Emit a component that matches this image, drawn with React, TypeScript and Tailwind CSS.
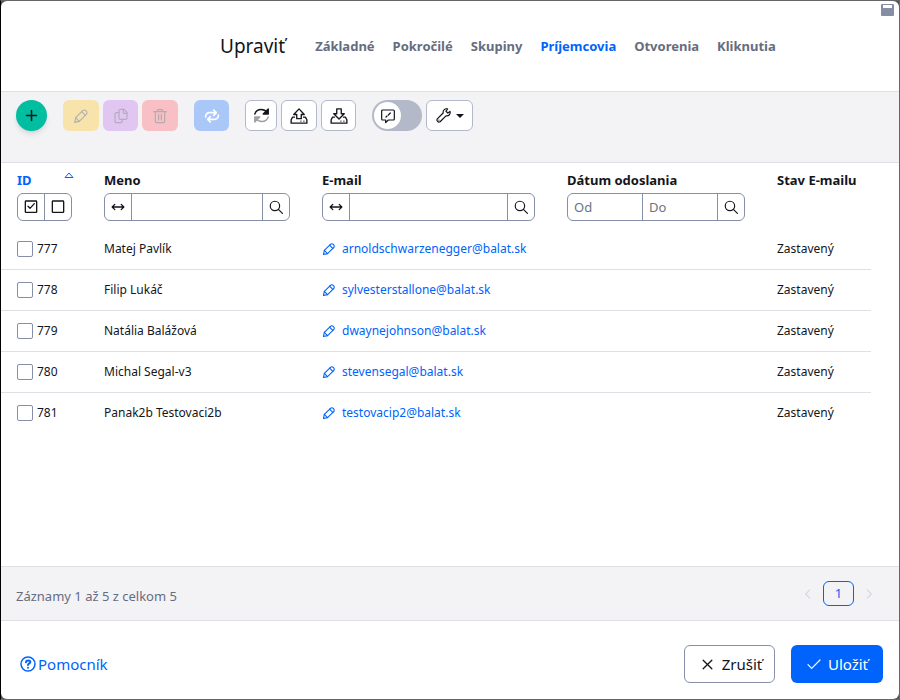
import React from "react";
import type { ReactNode } from "react";

function Icon({ size = 18, stroke = 1.5, className = "", children }: { size?: number; stroke?: number; className?: string; children: ReactNode }) {
  return (
    <svg width={size} height={size} viewBox="0 0 24 24" fill="none" stroke="currentColor" strokeWidth={stroke} strokeLinecap="round" strokeLinejoin="round" className={"shrink-0 " + className} aria-hidden="true">
      {children}
    </svg>
  );
}

const pencil = (
  <>
    <path d="M2.500 21.500l1.500-7L14.500 4a3.300 3.300 0 0 1 4.700 0l.8.8a3.300 3.300 0 0 1 0 4.700L9.500 20z" />
    <path d="M13 5.500l5.500 5.500M4 14.500l5.500 5.500" />
  </>
);
const files = (
  <>
    <path d="M15.500 2v5a1 1 0 0 0 1 1H21" />
    <path d="M19 17h-8a2 2 0 0 1-2-2V4a2 2 0 0 1 2-2h5.500L21 6.500V15a2 2 0 0 1-2 2z" />
    <path d="M14 17v3a2 2 0 0 1-2 2H5a2 2 0 0 1-2-2V9a2 2 0 0 1 2-2h4" />
  </>
);
const trash = <path d="M2.500 5.500h19M5 5.500V20a2 2 0 0 0 2 2h10a2 2 0 0 0 2-2V5.500M8 5.500V4a1.500 1.500 0 0 1 1.500-1.500h5A1.500 1.500 0 0 1 16 4v1.500M10 9.500v8.500M14 9.500v8.500" />;
const swap = <path d="M2.500 13.500v-1A5.500 5.500 0 0 1 8 7h10.500M14.500 3l4 4-4 4M21.500 10.500v1A5.500 5.500 0 0 1 16 17H5.500M9.500 13l-4 4 4 4" />;
const refresh = (
  <>
    <path d="M2.500 10c1.500-4.500 5-6.500 9-6.500 3.500 0 6.500 1.500 9 4.500" />
    <path fill="currentColor" d="M21.500 3v7h-7z" />
    <g className="opacity-40">
      <path d="M21.500 14c-1.500 4.500-5 6.500-9 6.500-3.500 0-6.500-1.500-9-4.500" />
      <path fill="currentColor" d="M2.500 21v-7h7z" />
    </g>
  </>
);
const upload = (
  <>
    <path d="M12 2.500L5 10h4v5.500h6V10h4z" />
    <path d="M6 13.500H3.500L1.500 17v4.500h21V17l-2-3.500H18M14.500 18.800h.1M18.500 18.800h.1" />
  </>
);
const download = (
  <>
    <path d="M12 16L5 9h4V2.500h6V9h4z" />
    <path d="M6 13.500H3.500L1.500 17v4.500h21V17l-2-3.500H18M14.500 18.800h.1M18.500 18.800h.1" />
  </>
);
const wrench = (
  <>
    <path d="M21.300 6.200l-3.300 2.300-2.500-2.500L17.800 2.700c-3.600-1-7 1.600-6.300 5.800L3.200 16.800a2.900 2.900 0 0 0 4 4l8.300-8.300c4.200.7 6.800-2.700 5.800-6.300z" />
    <path d="M5.500 18.500h.1" />
  </>
);
const comment = (
  <>
    <path d="M4 3h16a1.500 1.500 0 0 1 1.500 1.500v12A1.500 1.500 0 0 1 20 18h-7.500L8.500 22v-4H4a1.500 1.500 0 0 1-1.500-1.500v-12A1.500 1.500 0 0 1 4 3z" />
    <path d="M9 13.500l1.500-1.500M12.500 10.500l3-3" />
  </>
);
const search = <><circle cx="9.500" cy="9.500" r="7.500" /><path d="M21.500 21.500l-6.500-6.500" /></>;
const arrows = <path d="M6.500 7.500L2 12l4.500 4.500M2 12h20M17.500 7.500L22 12l-4.500 4.500" />;
const square = <rect x="3.500" y="3" width="17" height="17" rx="1" />;
const tick = <path d="M3 13l5.500 5.500L21 6" />;
const cross = <path d="M4 4l16 16M20 4L4 20" />;

function ToolButton({ label, className, disabled, children }: { label: string; className: string; disabled?: boolean; children: ReactNode }) {
  return (
    <button type="button" aria-label={label} disabled={disabled} className={"flex h-[31px] items-center justify-center rounded-md " + className}>
      {children}
    </button>
  );
}

const outlined = "border border-[#b3b9ca] bg-white text-[#13151b]";

function SearchButton() {
  return (
    <button type="button" aria-label="Hľadať" className="flex w-[27px] shrink-0 items-center justify-center border-l border-[#868ea8]">
      <Icon size={15} stroke={1.900}>{search}</Icon>
    </button>
  );
}

function TextFilter({ label }: { label: string }) {
  return (
    <div className="flex h-7 overflow-hidden rounded-md border border-[#868ea8] bg-white">
      <button type="button" aria-label="Spôsob filtrovania" className="flex w-[27px] shrink-0 items-center justify-center border-r border-[#868ea8]">
        <Icon size={14} stroke={2.200}>{arrows}</Icon>
      </button>
      <input type="text" aria-label={label} className="w-0 min-w-0 flex-1 px-1.5 text-[13px] outline-none" />
      <SearchButton />
    </div>
  );
}

function DateFilter() {
  return (
    <div className="flex h-7 overflow-hidden rounded-md border border-[#868ea8] bg-white">
      <input type="text" aria-label="Dátum od" placeholder="Od" className="w-0 min-w-0 flex-1 px-1.5 pt-0.5 text-[13px] font-normal outline-none placeholder:text-[#6c757d]" />
      <input type="text" aria-label="Dátum do" placeholder="Do" className="w-0 min-w-0 flex-1 border-l border-[#868ea8] px-1.5 pt-0.5 text-[13px] font-normal outline-none placeholder:text-[#6c757d]" />
      <SearchButton />
    </div>
  );
}

const rows = [
  { id: 777, name: "Matej Pavlík", email: "arnoldschwarzenegger@balat.sk" },
  { id: 778, name: "Filip Lukáč", email: "sylvesterstallone@balat.sk" },
  { id: 779, name: "Natália Balážová", email: "dwaynejohnson@balat.sk" },
  { id: 780, name: "Michal Segal-v3", email: "stevensegal@balat.sk" },
  { id: 781, name: "Panak2b Testovaci2b", email: "testovacip2@balat.sk" },
];

const tabs = ["Základné", "Pokročilé", "Skupiny", "Príjemcovia", "Otvorenia", "Kliknutia"];

const headLabel = "flex h-5 items-center justify-between text-[13px] font-bold whitespace-nowrap";

export default function App() {
  return (
    <div className="flex min-h-screen flex-col border border-[#666] border-l-black bg-[#555] font-['Noto_Sans','Open_Sans',sans-serif] text-[#13151b]">
      <main className="relative flex flex-1 flex-col overflow-hidden rounded-md bg-white">
        <header className="flex h-[91px] items-center border-b border-[#dfe0e6] pt-px pl-[219px]">
          <h1 className="mr-[30px] text-[19px]">Upraviť</h1>
          <nav className="flex gap-[18px]">
            {tabs.map((tab) => (
              <a key={tab} href="#" className={"text-[13px] font-bold " + (tab === "Príjemcovia" ? "text-[#0063fb]" : "text-[#666c80]")}>
                {tab}
              </a>
            ))}
          </nav>
          <button type="button" aria-label="Minimalizovať" className="absolute top-[3px] right-[5px] h-3 w-[13px] rounded-[1px] bg-[#868ea5] px-0.5 pt-px pb-[8px]">
            <span className="block h-[3px] bg-white" />
          </button>
        </header>

        <div className="flex h-[71px] items-start gap-4 border-b border-[#dfe0e6] bg-[#f3f3f6] px-[15px] pt-2">
          <button type="button" aria-label="Pridať" className="flex size-[31px] items-center justify-center rounded-full bg-[#00be9f] shadow-md">
            <Icon size={15} stroke={2.500}><path d="M12 4v16M4 12h16" /></Icon>
          </button>
          <div className="flex gap-1">
            <ToolButton label="Upraviť" disabled className="w-9 bg-[#f8e3ab] text-[#b3b1ae]"><Icon size={16} stroke={1.700}>{pencil}</Icon></ToolButton>
            <ToolButton label="Duplikovať" disabled className="w-[35px] bg-[#e2c6f2] text-[#b5adbd]"><Icon size={16} stroke={1.800}>{files}</Icon></ToolButton>
            <ToolButton label="Vymazať" disabled className="w-9 bg-[#f8c0c5] text-[#b9a9af]"><Icon size={16} stroke={1.800}>{trash}</Icon></ToolButton>
          </div>
          <ToolButton label="Zameniť" disabled className="w-[35px] bg-[#a9c8f8] text-white"><Icon size={16} stroke={2.600}>{swap}</Icon></ToolButton>
          <div className="flex gap-1">
            <ToolButton label="Obnoviť" className={"w-8 " + outlined}><Icon size={17} stroke={2}>{refresh}</Icon></ToolButton>
            <ToolButton label="Exportovať" className={"w-9 " + outlined}><Icon size={18} stroke={1.800}>{upload}</Icon></ToolButton>
            <ToolButton label="Importovať" className={"w-[35px] " + outlined}><Icon size={18} stroke={1.800}>{download}</Icon></ToolButton>
          </div>
          <div className="flex gap-1">
            <button type="button" role="switch" aria-checked="false" aria-label="Úprava bunky" className="flex h-[31px] w-[50px] items-center rounded-full bg-[#b3b9c8] px-0.5">
              <span className="flex size-[27px] items-center justify-center rounded-full bg-white"><Icon size={16} stroke={1.800}>{comment}</Icon></span>
            </button>
            <ToolButton label="Nastavenia" className={"w-[47px] gap-1 " + outlined}>
              <Icon size={17} stroke={1.700}>{wrench}</Icon>
              <svg width="8" height="4" viewBox="0 0 8 4" aria-hidden="true"><path d="M0 0h8L4 4z" fill="currentColor" /></svg>
            </ToolButton>
          </div>
        </div>

        <div className="flex-1 pr-7">
          <table className="w-full table-fixed border-separate border-spacing-0 text-left">
            <colgroup>
              <col className="w-[87px]" />
              <col className="w-[218px]" />
              <col />
              <col className="w-[210px]" />
              <col className="w-[110px]" />
            </colgroup>
            <thead>
              <tr className="align-top">
                <th className="px-4 pt-2 pb-2">
                  <div className={headLabel + " text-[#0063fb]"}>
                    ID
                    <svg width="10" height="6" viewBox="0 0 10 6" className="-mr-0.5 mb-3 shrink-0" aria-hidden="true"><path d="M1 5.500h8L5 1z" fill="none" stroke="currentColor" /></svg>
                  </div>
                  <div className="mt-0.5 flex h-7 w-[55px] rounded-md border border-[#868ea8]">
                    <button type="button" aria-label="Vybrať všetko" className="flex flex-1 items-center justify-center border-r border-[#868ea8]">
                      <Icon size={16} stroke={2}>{square}<path d="M7.500 11l3 3 6.500-7" /></Icon>
                    </button>
                    <button type="button" aria-label="Zrušiť výber" className="flex flex-1 items-center justify-center"><Icon size={16} stroke={2}>{square}</Icon></button>
                  </div>
                </th>
                <th className="px-4 pt-2 pb-2"><div className={headLabel}>Meno</div><div className="mt-0.5"><TextFilter label="Meno" /></div></th>
                <th className="px-4 pt-2 pb-2"><div className={headLabel}>E-mail</div><div className="mt-0.5"><TextFilter label="E-mail" /></div></th>
                <th className="px-4 pt-2 pb-2"><div className={headLabel}>Dátum odoslania</div><div className="mt-0.5"><DateFilter /></div></th>
                <th className="px-4 pt-2 pb-2"><div className={headLabel}>Stav E-mailu</div></th>
              </tr>
            </thead>
            <tbody className="text-[12px]">
              {rows.map((row) => (
                <tr key={row.id} className="h-[41px] [&>td]:border-b [&>td]:border-[#dfe0e6] last:[&>td]:border-transparent">
                  <td className="px-4">
                    <label className="flex items-center gap-1">
                      <input type="checkbox" className="size-4 appearance-none rounded-[2px] border border-[#868ea8] bg-white" />
                      {row.id}
                    </label>
                  </td>
                  <td className="px-4 whitespace-nowrap">{row.name}</td>
                  <td className="px-4">
                    <a href="#" className="flex items-center gap-1.5 text-[#0063fb]"><Icon size={14} stroke={1.900}>{pencil}</Icon>{row.email}</a>
                  </td>
                  <td />
                  <td className="px-4">Zastavený</td>
                </tr>
              ))}
            </tbody>
          </table>
        </div>

        <div className="flex h-[55px] items-center justify-between border-y border-[#dfe0e6] bg-[#f3f3f6] pr-[23px] pl-[15px] text-[13px] text-[#666c80]">
          <p className="pt-1.5">Záznamy 1 až 5 z celkom 5</p>
          <nav aria-label="Stránkovanie" className="flex items-center gap-2">
            <button type="button" disabled aria-label="Predchádzajúca" className="text-[#d5d8df]"><Icon size={14} stroke={2}><path d="M15 5l-7 7 7 7" /></Icon></button>
            <button type="button" className="h-[25px] w-[31px] rounded-md border border-[#0063fb] text-[#0063fb]">1</button>
            <button type="button" disabled aria-label="Nasledujúca" className="text-[#d5d8df]"><Icon size={14} stroke={2}><path d="M9 5l7 7-7 7" /></Icon></button>
          </nav>
        </div>

        <footer className="flex items-center justify-between px-4 pt-6 pb-4 text-[15px]">
          <a href="#" className="flex items-center gap-0.5 pl-[3px] text-[#0063fb]">
            <Icon size={16} stroke={2.200}><circle cx="12" cy="12" r="10.500" /><path strokeWidth="3" d="M9 9.500c0-4 6.500-3.500 6.500-.5 0 2-3.500 2-3.500 4.500M12 17.500v.1" /></Icon>
            Pomocník
          </a>
          <div className="flex gap-4">
            <button type="button" className="flex h-[38px] w-[91px] items-center justify-center gap-2 rounded-md border border-[#868ea8] pl-1"><Icon size={13} stroke={2.400}>{cross}</Icon>Zrušiť</button>
            <button type="button" className="flex h-[38px] w-[92px] items-center justify-center gap-1.5 rounded-md bg-[#0063fb] text-white"><Icon size={16} stroke={1.800}>{tick}</Icon>Uložiť</button>
          </div>
        </footer>
      </main>
    </div>
  );
}
